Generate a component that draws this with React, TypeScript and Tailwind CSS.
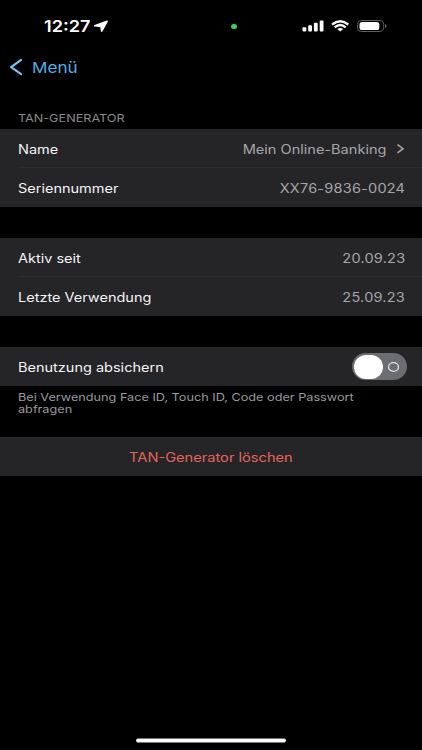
import type { ReactNode } from "react";

function Row({ label, children, divider }: { label: string; children?: ReactNode; divider?: boolean }) {
  return (
    <div className="relative flex h-[39px] items-center justify-between pl-[18px] pr-[17px] text-[12.5px] leading-4">
      <span className="origin-left scale-x-[1.16] whitespace-nowrap pt-[2px] text-[#f4f4f5]">{label}</span>
      {children}
      {divider && <div className="absolute bottom-0 left-[18px] right-0 h-px bg-[#2d2d2f]" />}
    </div>
  );
}

function Value({ children }: { children: ReactNode }) {
  return <span className="origin-right scale-x-[1.165] whitespace-nowrap pt-[2px] text-[#a5a5ab]">{children}</span>;
}

function NumberValue({ children }: { children: ReactNode }) {
  return <span className="origin-right scale-x-[1.16] whitespace-nowrap pt-[2px] tracking-[0.2px] text-[#a5a5ab]">{children}</span>;
}

function StatusBar() {
  return (
    <div className="relative h-[50px]">
      <div className="absolute left-[44px] top-[16px] origin-left scale-x-[1.13] text-[16px] font-semibold leading-5 text-white">12:27</div>
      <svg className="absolute left-[93px] top-[19px]" width="16" height="14" viewBox="0 0 16 14">
        <path d="M14.1 2.3 8.7 12.1 7.9 7.4 1.7 6.8Z" fill="#fff" stroke="#fff" strokeWidth="1.6" strokeLinejoin="round" />
      </svg>
      <div className="absolute left-[231px] top-[24px] h-[5px] w-[6px] rounded-full bg-[#36d158]" />
      <svg className="absolute left-[302px] top-[19px]" width="86" height="14" viewBox="0 0 86 14">
        <g fill="#fff">
          <rect x="0.5" y="8.2" width="3.8" height="4.3" rx="1" />
          <rect x="6.2" y="6.2" width="3.8" height="6.3" rx="1" />
          <rect x="11.9" y="3.8" width="3.8" height="8.7" rx="1" />
          <rect x="17.7" y="1.6" width="3.8" height="10.9" rx="1" />
          <path d="M38.2 12.6 35.2 9.9Q38.2 8 41.2 9.9Z" />
        </g>
        <g fill="none" stroke="#fff" strokeWidth="2.3">
          <path d="M30.1 5.5Q38.2-1.1 46.3 5.5" />
          <path d="M32.7 8.3Q38.2 3.8 43.7 8.3" />
        </g>
        <rect x="55.5" y="1.5" width="26.2" height="11" rx="3.8" fill="none" stroke="#5e5e5e" />
        <rect x="57.5" y="2.9" width="19.8" height="8.2" rx="2.6" fill="#fff" />
        <path d="M83 5v4q1.6-.6 1.6-2T83 5Z" fill="#666" />
      </svg>
    </div>
  );
}

export default function App() {
  return (
    <div className="flex h-[750px] w-[422px] flex-col overflow-hidden bg-black font-['Inter',sans-serif]">
      <StatusBar />
      <div className="flex h-[34px] items-center pl-[9px] text-[#53aee8]">
        <svg width="15" height="18" viewBox="0 0 15 18" fill="none">
          <path d="M12.1 1.9 2.1 9.1 12.1 16.2" stroke="#74c6fa" strokeWidth="2.1" strokeLinecap="round" strokeLinejoin="round" />
        </svg>
        <span className="ml-[8px] origin-left scale-x-[1.14] pt-[2px] text-[15px] leading-5">Menü</span>
      </div>
      <div className="flex h-[45px] items-end pb-[3px] pl-[18px] text-[10.8px] leading-[14px] text-[#89898e]">
        <span className="origin-left scale-x-[1.17] whitespace-nowrap">TAN-GENERATOR</span>
      </div>
      <div className="bg-[#252527]">
        <Row label="Name" divider>
          <div className="flex items-center gap-[10px]">
            <Value>Mein Online-Banking</Value>
            <svg width="9" height="10" viewBox="0 0 9 10" fill="none">
              <path d="M1.5 0.6 7 4.7 1.5 8.8" stroke="#a5a5ab" strokeWidth="1.6" />
            </svg>
          </div>
        </Row>
        <Row label="Seriennummer"><NumberValue>XX76-9836-0024</NumberValue></Row>
      </div>
      <div className="mt-[31px] bg-[#252527]">
        <Row label="Aktiv seit" divider><NumberValue>20.09.23</NumberValue></Row>
        <Row label="Letzte Verwendung"><NumberValue>25.09.23</NumberValue></Row>
      </div>
      <div className="mt-[31px] bg-[#252527]">
        <Row label="Benutzung absichern">
          <div className="-mr-[2px] flex h-[27px] w-[55px] items-center justify-between rounded-full bg-[#6c6c73] pl-[2px] pr-[7px]">
            <div className="h-[24px] w-[29px] rounded-full bg-white" />
            <svg width="13" height="11" viewBox="0 0 13 11" fill="none">
              <ellipse cx="6.5" cy="6" rx="5" ry="4.3" stroke="#e2e2e5" strokeWidth="1.3" />
            </svg>
          </div>
        </Row>
      </div>
      <div className="h-[51px] pl-[18px] pt-[6px] text-[10.8px] leading-[12px] text-[#9a9a9f]">
        <p className="w-fit origin-left scale-x-[1.175] whitespace-nowrap">
          Bei Verwendung Face ID, Touch ID, Code oder Passwort<br />abfragen
        </p>
      </div>
      <div className="flex h-[39px] items-center justify-center bg-[#252527] text-[12.5px] leading-4 text-[#e5645f]">
        <span className="scale-x-[1.17] whitespace-nowrap pt-[2px]">TAN-Generator löschen</span>
      </div>
      <div className="mx-auto mb-[7px] mt-auto h-[5px] w-[150px] rounded-full border-y border-[#777] bg-white" />
    </div>
  );
}
